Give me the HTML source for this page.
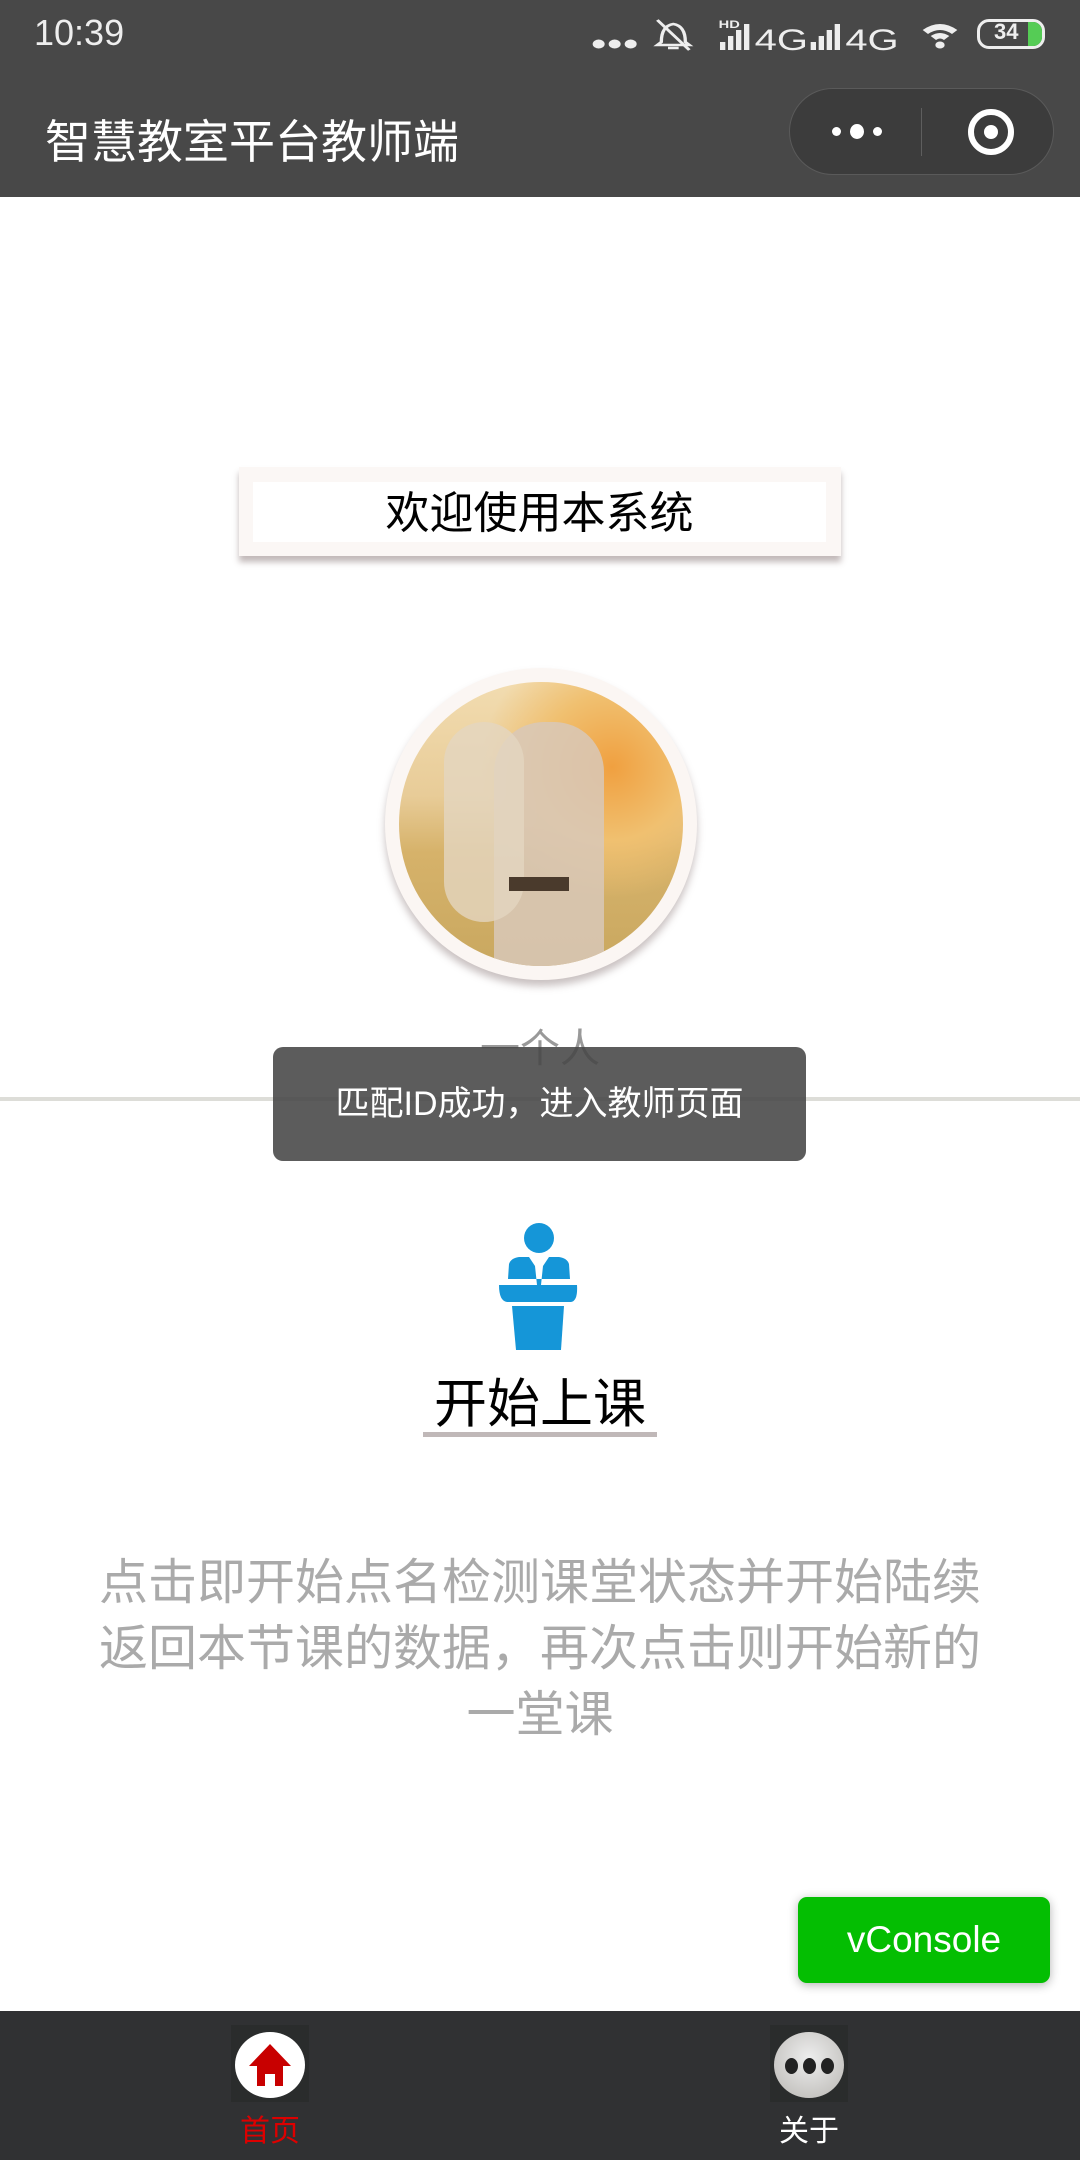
<!DOCTYPE html>
<html><head><meta charset="utf-8"><style>
*{margin:0;padding:0;box-sizing:border-box}
body{width:1080px;height:2160px;position:relative;background:#fff;font-family:"Liberation Sans","Noto Sans CJK SC",sans-serif;overflow:hidden}
.abs{position:absolute}
</style></head><body>
<div class="abs" style="left:0;top:0;width:1080px;height:197px;background:#484848"></div>
<div class="abs" style="left:34px;top:12px;color:#eee;font-size:36px;">10:39</div>
<svg class="abs" style="left:588px;top:14px" width="376" height="40" viewBox="0 0 282 40" preserveAspectRatio="none" fill="#eee">
<circle cx="8" cy="30" r="4.5"/><circle cx="20" cy="30" r="4.5"/><circle cx="32" cy="30" r="4.5"/>
<path d="M55 28 Q55 12 64 10 Q73 12 73 28 L76 31 L52 31Z M60 34 L68 34" fill="none" stroke="#eee" stroke-width="2.5"/><line x1="52" y1="6" x2="76" y2="36" stroke="#eee" stroke-width="2.5"/>
<text x="98" y="14" font-size="11" font-weight="bold" font-family="Liberation Sans">HD</text>
<rect x="99" y="28" width="4" height="8"/><rect x="105" y="22" width="4" height="14"/><rect x="111" y="16" width="4" height="20"/><rect x="117" y="10" width="4" height="26"/>
<text x="125" y="36" font-size="30" font-family="Liberation Sans">4G</text>
<rect x="167" y="28" width="4" height="8"/><rect x="173" y="22" width="4" height="14"/><rect x="179" y="16" width="4" height="20"/><rect x="185" y="10" width="4" height="26"/>
<text x="193" y="36" font-size="30" font-family="Liberation Sans">4G</text>
<path d="M251 16 Q264 4 277 16 L273 20 Q264 12 255 20Z M257 22 Q264 16 271 22 L267 26 Q264 23 261 26Z"/><circle cx="264" cy="31" r="3.5"/>
</svg>
<div class="abs" style="left:977px;top:19px;width:68px;height:30px;border:3px solid #eee;border-radius:12px;overflow:hidden"><div style="position:absolute;right:0;top:0;width:14px;height:100%;background:#5c5"></div><div style="position:absolute;left:14px;top:-3px;font-size:22px;color:#eee;font-weight:bold">34</div></div>
<div class="abs" style="left:45px;top:106px;color:#fff;font-size:46px;white-space:nowrap">智慧教室平台教师端</div>
<div class="abs" style="left:789px;top:88px;width:265px;height:87px;border-radius:44px;background:#3c3c3c;border:1px solid #5a5a5a"></div>
<div class="abs" style="left:921px;top:108px;width:1px;height:48px;background:#5e5e5e"></div>
<div class="abs" style="left:832px;top:127px;width:9px;height:9px;border-radius:50%;background:#fff"></div>
<div class="abs" style="left:850px;top:124px;width:14px;height:15px;border-radius:50%;background:#fff"></div>
<div class="abs" style="left:873px;top:127px;width:9px;height:9px;border-radius:50%;background:#fff"></div>
<div class="abs" style="left:968px;top:109px;width:46px;height:46px;border-radius:50%;border:6px solid #fff"></div>
<div class="abs" style="left:984px;top:125px;width:14px;height:14px;border-radius:50%;background:#fff"></div>

<div class="abs" style="left:239px;top:467px;width:602px;height:89px;background:#fbf7f5;box-shadow:0 6px 6px rgba(120,100,100,.45)"></div>
<div class="abs" style="left:253px;top:482px;width:573px;height:60px;background:#fff;text-align:center;font-size:44px;line-height:64px;color:#000">欢迎使用本系统</div>

<div class="abs" style="left:385px;top:668px;width:312px;height:312px;border-radius:50%;background:#fbf6f3;box-shadow:0 6px 8px rgba(120,100,100,.4)"></div>
<div class="abs" style="left:399px;top:682px;width:284px;height:284px;border-radius:50%;overflow:hidden;background:radial-gradient(circle at 75% 30%,#f0a040 0,#f0c070 25%,transparent 45%),linear-gradient(180deg,#f2dcb0 0%,#e8cc98 40%,#d6b26a 60%,#c9a860 100%)">
<div style="position:absolute;left:95px;top:40px;width:110px;height:250px;border-radius:50px 50px 10px 10px;background:#d8c8b8;opacity:.85"></div>
<div style="position:absolute;left:45px;top:40px;width:80px;height:200px;border-radius:40px;background:#e4d6c0;opacity:.8"></div>
<div style="position:absolute;left:110px;top:195px;width:60px;height:14px;background:#4a3a2c"></div>
</div>
<div class="abs" style="left:0;top:1016px;width:1080px;text-align:center;font-size:40px;color:#999">一个人</div>
<div class="abs" style="left:0;top:1097px;width:1080px;height:4px;background:#ddddd8"></div>

<div class="abs" style="left:273px;top:1047px;width:533px;height:114px;border-radius:10px;background:rgba(70,70,70,.88);color:#fff;font-size:34px;text-align:center;line-height:114px;white-space:nowrap">匹配ID成功，进入教师页面</div>

<svg class="abs" style="left:499px;top:1223px" width="80" height="128" viewBox="0 0 80 128">
<circle cx="40" cy="15" r="15" fill="#1596d8"/>
<path d="M10 41 Q12 35 20 34 L30 34 L36 43 L38 62 L42 62 L44 43 L50 34 L60 34 Q68 35 70 41 L71 56 L9 56Z" fill="#1596d8"/>
<path d="M0 62 L78 62 Q79 78 72 79 L8 79 Q0 78 0 62Z" fill="#1596d8"/>
<path d="M13 83 L65 83 L62 127 L17 127Z" fill="#1596d8"/>
</svg>
<div class="abs" style="left:0;top:1362px;width:1080px;text-align:center;font-size:53px;color:#000">开始上课</div>
<div class="abs" style="left:423px;top:1432px;width:234px;height:5px;background:#c0b8b8"></div>

<div class="abs" style="left:40px;top:1550px;width:1000px;text-align:center;font-size:49px;line-height:66px;color:#aaa">点击即开始点名检测课堂状态并开始陆续<br>返回本节课的数据，再次点击则开始新的<br>一堂课</div>

<div class="abs" style="left:798px;top:1897px;width:252px;height:86px;border-radius:9px;background:#04be02;box-shadow:0 2px 10px rgba(0,0,0,.3);color:#fff;font-size:37px;text-align:center;line-height:86px">vConsole</div>

<div class="abs" style="left:0;top:2011px;width:1080px;height:149px;background:#303133"></div>
<div class="abs" style="left:231px;top:2025px;width:78px;height:77px;background:#2a2c2c"></div>
<div class="abs" style="left:235px;top:2032px;width:70px;height:66px;border-radius:50%;background:#fff"></div>
<svg class="abs" style="left:243px;top:2036px" width="54" height="56" viewBox="0 0 54 56"><path d="M27 8 L48 30 L40 30 L40 50 L32 50 L32 38 L22 38 L22 50 L14 50 L14 30 L6 30Z" fill="#c80000"/></svg>
<div class="abs" style="left:770px;top:2025px;width:78px;height:77px;background:#2a2c2c"></div>
<div class="abs" style="left:774px;top:2032px;width:70px;height:66px;border-radius:50%;background:radial-gradient(circle at 50% 40%,#eee,#b8b6b2)"></div>
<div class="abs" style="left:785px;top:2058px;width:13px;height:16px;border-radius:50%;background:#222"></div>
<div class="abs" style="left:803px;top:2058px;width:13px;height:16px;border-radius:50%;background:#222"></div>
<div class="abs" style="left:821px;top:2058px;width:13px;height:16px;border-radius:50%;background:#222"></div>
<div class="abs" style="left:170px;top:2106px;width:200px;text-align:center;font-size:30px;color:#d00">首页</div>
<div class="abs" style="left:709px;top:2106px;width:200px;text-align:center;font-size:30px;color:#fff">关于</div>
</body></html>
